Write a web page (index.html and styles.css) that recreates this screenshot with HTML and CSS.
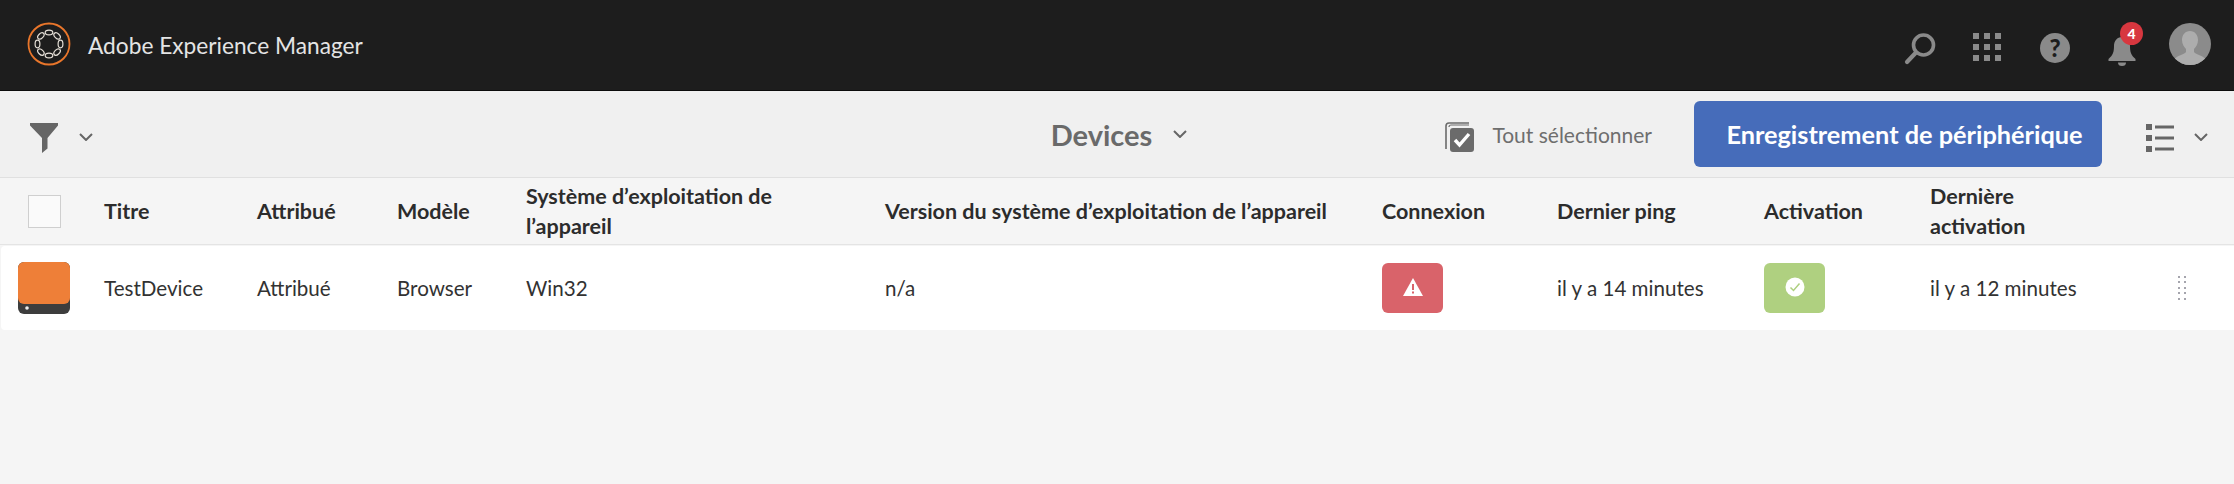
FILE: index.html
```html
<!DOCTYPE html>
<html lang="fr">
<head>
<meta charset="utf-8">
<title>Devices</title>
<link rel="stylesheet" href="styles.css">
</head>
<body>
<header class="shell">
  <div class="brand">
    <svg class="logo" width="46" height="46" viewBox="0 0 46 46" fill="none">
      <circle cx="23" cy="23" r="20.500" stroke="#e9762b" stroke-width="1.800"/>
      <g stroke="#e6e0d8" stroke-width="1.200">
        <ellipse cx="23" cy="11.500" rx="3.800" ry="2.400"/>
        <ellipse cx="23" cy="34.500" rx="3.800" ry="2.400"/>
        <ellipse cx="11.500" cy="23" rx="2.400" ry="3.800"/>
        <ellipse cx="34.500" cy="23" rx="2.400" ry="3.800"/>
        <ellipse cx="14.900" cy="14.900" rx="3.800" ry="2.400" transform="rotate(-45 14.900 14.900)"/>
        <ellipse cx="31.100" cy="14.900" rx="3.800" ry="2.400" transform="rotate(45 31.100 14.900)"/>
        <ellipse cx="14.900" cy="31.100" rx="3.800" ry="2.400" transform="rotate(45 14.900 31.100)"/>
        <ellipse cx="31.100" cy="31.100" rx="3.800" ry="2.400" transform="rotate(-45 31.100 31.100)"/>
      </g>
    </svg>
    <span class="brand-name">Adobe Experience Manager</span>
  </div>
  <div class="shell-actions">
    <svg class="act-search" width="34" height="34" viewBox="0 0 34 34" fill="none" stroke="#8a8a8a">
      <circle cx="21.500" cy="14" r="10" stroke-width="3.600"/>
      <path d="M14 21.500 5 31" stroke-width="4.200" stroke-linecap="round"/>
    </svg>
    <svg class="act-grid" width="30" height="30" viewBox="0 0 30 30" fill="#8a8a8a">
      <rect x="1" y="1" width="6" height="6"/><rect x="12" y="1" width="6" height="6"/><rect x="23" y="1" width="6" height="6"/>
      <rect x="1" y="12" width="6" height="6"/><rect x="12" y="12" width="6" height="6"/><rect x="23" y="12" width="6" height="6"/>
      <rect x="1" y="23" width="6" height="6"/><rect x="12" y="23" width="6" height="6"/><rect x="23" y="23" width="6" height="6"/>
    </svg>
    <span class="help">?</span>
    <span class="bell">
      <svg width="28" height="30" viewBox="0 0 28 30" fill="#8a8a8a">
        <path d="M14 1c-5 0-8 4-8 9 0 6-1 9-5.500 13v2h27v-2C23 19 22 16 22 10c0-5-3-9-8-9z"/>
        <path d="M10 26.500h8a4 3.500 0 0 1-8 0z"/>
      </svg>
      <span class="badge">4</span>
    </span>
    <svg class="avatar" width="42" height="42" viewBox="0 0 42 42">
      <defs><clipPath id="avatar-clip"><circle cx="21" cy="21" r="21"/></clipPath></defs>
      <g clip-path="url(#avatar-clip)">
        <rect width="42" height="42" fill="#8b8b8b"/>
        <path d="M21 8c-5 0-8 4-8 9 0 4 2 7 4 9v3c-2 3-9 3-12 8v5h32v-5c-3-5-10-5-12-8v-3c2-2 4-5 4-9 0-5-3-9-8-9z" fill="#adadad"/>
      </g>
    </svg>
  </div>
</header>

<div class="toolbar">
  <div class="tool-left">
    <svg class="low-icon" width="28" height="30" viewBox="0 0 28 30" fill="#666">
      <path d="M0 0h28v2.500L17.500 15v10.500L12 30V15L0 2.500z"/>
    </svg>
    <svg class="chev low-chev" width="14" height="8" viewBox="0 0 14 8" fill="none"><path d="M1 1l6 6 6-6"/></svg>
  </div>
  <div class="tool-title">
    <span>Devices</span>
    <svg class="chev" width="14" height="8" viewBox="0 0 14 8" fill="none"><path d="M1 1l6 6 6-6"/></svg>
  </div>
  <div class="tool-right">
    <span class="select-all">
      <svg class="select-icon" width="29" height="30" viewBox="0 0 29 30">
        <path d="M1 27V4a3 3 0 0 1 3-3h20" fill="none" stroke="#6b6b6b" stroke-width="1.600"/>
        <path d="M4 5a2 2 0 0 1 2-2h18" fill="none" stroke="#6b6b6b" stroke-width="1.200"/>
        <rect x="5" y="6" width="24" height="24" rx="3" fill="#6b6b6b"/>
        <path d="M10 18l4.500 5L24 12" fill="none" stroke="#fff" stroke-width="3.400"/>
      </svg>
      <span>Tout sélectionner</span>
    </span>
    <button class="primary" type="button">Enregistrement de périphérique</button>
    <svg class="list-icon low-icon" width="28" height="30" viewBox="0 0 28 30" fill="#666">
      <rect x="0" y="1" width="6" height="6"/><rect x="9" y="2.500" width="19" height="3"/>
      <rect x="0" y="12" width="6" height="6"/><rect x="9" y="13.500" width="19" height="3"/>
      <rect x="0" y="23" width="6" height="6"/><rect x="9" y="24.500" width="19" height="3"/>
    </svg>
    <svg class="chev low-chev" width="14" height="8" viewBox="0 0 14 8" fill="none"><path d="M1 1l6 6 6-6"/></svg>
  </div>
</div>

<main class="list">
  <div class="row head">
    <div class="cell check-cell"><span class="checkbox"></span></div>
    <div class="cell">Titre</div>
    <div class="cell">Attribué</div>
    <div class="cell">Modèle</div>
    <div class="cell"><span class="wrap-os">Système d’exploitation de l’appareil</span></div>
    <div class="cell">Version du système d’exploitation de l’appareil</div>
    <div class="cell">Connexion</div>
    <div class="cell">Dernier ping</div>
    <div class="cell">Activation</div>
    <div class="cell"><span class="wrap-last">Dernière activation</span></div>
    <div class="cell"></div>
  </div>
  <div class="row body">
    <div class="cell thumb-cell">
      <svg width="52" height="52" viewBox="0 0 52 52">
        <rect width="52" height="52" rx="6" fill="#3d3d3d"/>
        <path d="M0 6a6 6 0 0 1 6-6h40a6 6 0 0 1 6 6v30a6 6 0 0 1-6 6H6a6 6 0 0 1-6-6z" fill="#ee7f38"/>
        <circle cx="9" cy="46" r="1.800" fill="#eee"/>
      </svg>
    </div>
    <div class="cell">TestDevice</div>
    <div class="cell">Attribué</div>
    <div class="cell">Browser</div>
    <div class="cell">Win32</div>
    <div class="cell">n/a</div>
    <div class="cell">
      <span class="status error">
        <svg width="20" height="18" viewBox="0 0 20 18">
          <path d="M10 0l10 18H0z" fill="#fff"/>
          <rect x="9" y="6" width="2" height="6" fill="#d9636a"/><rect x="9" y="13.500" width="2" height="2" fill="#d9636a"/>
        </svg>
      </span>
    </div>
    <div class="cell">il y a 14 minutes</div>
    <div class="cell">
      <span class="status ok">
        <svg width="20" height="20" viewBox="0 0 20 20">
          <circle cx="10" cy="10" r="9.500" fill="#fff"/>
          <path d="M5.500 10.500l3 3 6-7" fill="none" stroke="#aed080" stroke-width="1.500"/>
        </svg>
      </span>
    </div>
    <div class="cell">il y a 12 minutes</div>
    <div class="cell handle-cell">
      <svg width="8" height="24" viewBox="0 0 8 24" fill="#a5a5ad">
        <rect x="0" y="0" width="2" height="2"/><rect x="6" y="0" width="2" height="2"/>
        <rect x="0" y="5" width="2" height="2"/><rect x="6" y="5" width="2" height="2"/>
        <rect x="0" y="11" width="2" height="2"/><rect x="6" y="11" width="2" height="2"/>
        <rect x="0" y="16" width="2" height="2"/><rect x="6" y="16" width="2" height="2"/>
        <rect x="0" y="22" width="2" height="2"/><rect x="6" y="22" width="2" height="2"/>
      </svg>
    </div>
  </div>
</main>
</body>
</html>
```

FILE: styles.css
```css
* { box-sizing: border-box; }

html, body {
  margin: 0;
  height: 100%;
  overflow: hidden;
}

body {
  background: #f5f5f5;
  font-family: "Lato", "Open Sans", sans-serif;
  color: #323232;
  display: flex;
  flex-direction: column;
}

.shell {
  height: 91px;
  flex: none;
  background: #1d1d1d;
  border-bottom: 1px solid #0c0c0c;
  display: flex;
  align-items: center;
  justify-content: space-between;
  padding: 0 23px 2px 26px;
}

.brand {
  display: flex;
  align-items: center;
  gap: 16px;
}

.brand-name {
  color: #e4e4e4;
  font-size: 22.7px;
  padding-top: 2px;
}

.shell-actions {
  display: flex;
  align-items: center;
  gap: 36px;
}

.act-search { margin-top: 8px; }
.act-grid { margin-top: 6px; }

.help {
  width: 30px;
  height: 30px;
  margin: 7px 0 0 2px;
  border-radius: 50%;
  background: #8a8a8a;
  color: #1d1d1d;
  font-size: 24px;
  font-weight: 900;
  display: flex;
  align-items: center;
  justify-content: center;
}

.bell {
  position: relative;
  display: flex;
  margin: 13px 0 0 2px;
}

.badge {
  position: absolute;
  top: -14px;
  left: 12px;
  width: 23px;
  height: 23px;
  border-radius: 50%;
  background: #d7373f;
  color: #fff;
  font-size: 14px;
  font-weight: 900;
  display: flex;
  align-items: center;
  justify-content: center;
}

.avatar { margin-left: -3px; }

.toolbar {
  height: 87px;
  flex: none;
  background: #f0f0f0;
  border-bottom: 1px solid #e0e0e0;
  display: grid;
  grid-template-columns: 1fr auto 1fr;
  align-items: center;
  padding: 0 26px 0 30px;
}

.chev {
  stroke: #666;
  stroke-width: 2;
}

.low-icon { margin-top: 7px; }
.low-chev { margin-top: 6px; }

.tool-left {
  display: flex;
  align-items: center;
  gap: 21px;
}

.tool-title {
  display: flex;
  align-items: center;
  gap: 21px;
  color: #6a6a6a;
  font-size: 29px;
  font-weight: 700;
}

.tool-right {
  display: flex;
  align-items: center;
  justify-content: flex-end;
}

.select-all {
  display: flex;
  align-items: center;
  gap: 18px;
  color: #6e6e6e;
  font-size: 21px;
  margin-right: 41px;
}

.select-icon { margin-top: 5px; }

.primary {
  width: 408px;
  height: 66px;
  padding: 0 0 0 13px;
  border: 0;
  border-radius: 6px;
  background: #466cba;
  color: #fff;
  font: 700 25.3px "Lato", "Open Sans", sans-serif;
  margin: 0 44px 0 1px;
}

.list-icon {
  margin-right: 20px;
}

.row {
  display: grid;
  grid-template-columns: 104px 153px 140px 129px 359px 497px 175px 207px 166px 248px 56px;
  align-items: center;
}

.cell {
  font-size: 20.6px;
  line-height: 28px;
  padding-right: 16px;
}

.head {
  height: 67px;
  border-bottom: 1px solid #e4e4e4;
}

.head .cell {
  font-weight: 700;
  font-size: 21.5px;
  line-height: 30px;
  color: #2c2c2c;
}

.wrap-os {
  display: block;
  max-width: 290px;
}

.wrap-last {
  display: block;
  max-width: 150px;
}

.check-cell {
  padding-left: 28px;
}

.checkbox {
  display: block;
  width: 33px;
  height: 33px;
  background: #fafafa;
  border: 1px solid #cfcfcf;
}

.body {
  height: 84px;
  margin-top: 1px;
  background: #fff;
  border-radius: 4px 0 0 4px;
  margin-left: 1px;
  grid-template-columns: 103px 153px 140px 129px 359px 497px 175px 207px 166px 248px 56px;
}

.thumb-cell {
  padding-left: 17px;
  display: flex;
}

.status {
  width: 61px;
  height: 50px;
  border-radius: 6px;
  display: flex;
  align-items: center;
  justify-content: center;
  padding-bottom: 2px;
}

.error { background: #d9636a; }
.ok { background: #afd080; }

.handle-cell {
  display: flex;
  padding-left: 0;
}
```
